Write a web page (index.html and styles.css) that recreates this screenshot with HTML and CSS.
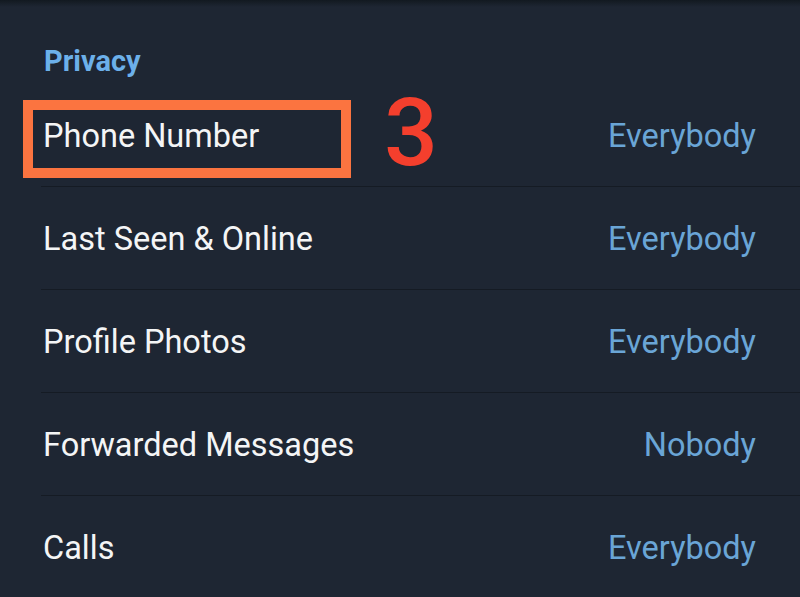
FILE: index.html
```html
<!DOCTYPE html>
<html>
<head>
<meta charset="utf-8">
<link rel="stylesheet" href="styles.css">
</head>
<body>
<div class="screen">
  <div class="topshade"></div>
  <h2 class="section">Privacy</h2>
  <ul class="list">
    <li class="row first"><span class="label">Phone Number</span><span class="value">Everybody</span>
      <span class="highlight"></span><span class="mark">3</span></li>
    <li class="row"><span class="label">Last Seen &amp; Online</span><span class="value">Everybody</span></li>
    <li class="row"><span class="label">Profile Photos</span><span class="value">Everybody</span></li>
    <li class="row"><span class="label">Forwarded Messages</span><span class="value">Nobody</span></li>
    <li class="row last"><span class="label">Calls</span><span class="value">Everybody</span></li>
  </ul>
</div>
</body>
</html>
```
FILE: styles.css
```css
html, body {
  margin: 0;
  padding: 0;
  background: #1e2633;
}
.screen {
  position: relative;
  width: 800px;
  height: 597px;
  overflow: hidden;
  background: #1e2633;
  font-family: Roboto, "Liberation Sans", sans-serif;
}
.topshade {
  position: absolute;
  left: 0; top: 0; right: 0;
  height: 7px;
  background: linear-gradient(#121920, #1e2633);
}
.section {
  margin: 0;
  padding: 44px 0 0 44px;
  height: 40px;
  font-size: 29px;
  font-weight: 700;
  line-height: 34px;
  color: #6cb0ea;
}
.list {
  list-style: none;
  margin: 0;
  padding: 0 0 0 41px;
}
.row {
  position: relative;
  display: flex;
  justify-content: space-between;
  align-items: center;
  height: 102px;
  padding-right: 44px;
  border-bottom: 1px solid #151b24;
  font-size: 32.5px;
}
.row.last { border-bottom: none; }
.label {
  color: #f4f5f6;
  padding-left: 2px;
  padding-top: 2px;
}
.value {
  color: #6aa5d6;
  padding-top: 2px;
}
.highlight {
  position: absolute;
  left: -18px;
  top: 16px;
  width: 308px;
  height: 58px;
  border: 10px solid #fb7440;
}
.mark {
  position: absolute;
  left: 343px;
  top: -1px;
  font-size: 95px;
  font-weight: 500;
  line-height: 100px;
  color: #f43f2d;
}
```
